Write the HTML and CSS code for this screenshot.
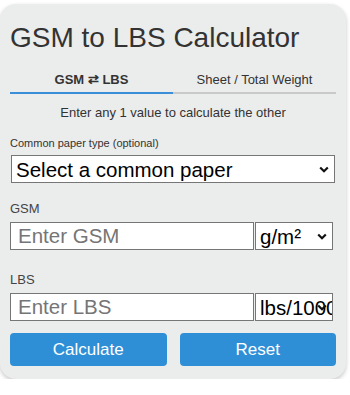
FILE: index.html
```html
<!DOCTYPE html>
<html>
<head>
<meta charset="utf-8">
<link rel="stylesheet" href="styles.css">
</head>
<body>
<div class="card">
  <h1 class="title">GSM to LBS Calculator</h1>
  <div class="tabs">
    <div class="tab active">GSM ⇄ LBS</div>
    <div class="tab">Sheet / Total Weight</div>
  </div>
  <p class="hint">Enter any 1 value to calculate the other</p>
  <label class="small-label">Common paper type (optional)</label>
  <div class="select-wrap paper-wrap">
    <select class="paper-select">
      <option>Select a common paper</option>
    </select>
    <svg class="chev" width="10" height="7" viewBox="0 0 10 7"><path d="M1.2 1.5 L5 5.2 L8.8 1.5" fill="none" stroke="#111" stroke-width="2.2"/></svg>
  </div>
  <div class="group">
    <label class="field-label">GSM</label>
    <div class="row">
      <input class="num" type="text" placeholder="Enter GSM">
      <div class="select-wrap">
        <select class="unit"><option>g/m²</option></select>
        <svg class="chev" width="10" height="7" viewBox="0 0 10 7"><path d="M1.2 1.5 L5 5.2 L8.8 1.5" fill="none" stroke="#111" stroke-width="2.2"/></svg>
      </div>
    </div>
  </div>
  <div class="group group-lbs">
    <label class="field-label">LBS</label>
    <div class="row">
      <input class="num" type="text" placeholder="Enter LBS">
      <div class="select-wrap">
        <select class="unit"><option>lbs/1000 sheets</option></select>
        <svg class="chev" width="10" height="7" viewBox="0 0 10 7"><path d="M1.2 1.5 L5 5.2 L8.8 1.5" fill="none" stroke="#111" stroke-width="2.2"/></svg>
      </div>
    </div>
  </div>
  <div class="buttons">
    <button class="btn">Calculate</button>
    <button class="btn">Reset</button>
  </div>
</div>
</body>
</html>
```

FILE: styles.css
```css
html, body {
  margin: 0;
  padding: 0;
  background: #ffffff;
}
body {
  font-family: Arial, "Liberation Sans", sans-serif;
  color: #333;
}
.card {
  box-sizing: border-box;
  width: 346px;
  margin-top: 4px;
  padding: 18px 10px 13px 10px;
  background: #ebecec;
  border-radius: 16px;
  box-shadow: 0 2px 4px rgba(0, 0, 0, 0.22);
}
.title {
  margin: 0;
  font-size: 28px;
  font-weight: normal;
  color: #333;
  line-height: 32px;
}
.tabs {
  display: flex;
  margin-top: 10px;
}
.tab {
  flex: 1;
  text-align: center;
  font-size: 13px;
  line-height: 15px;
  padding: 8px 0 5px 0;
  border-bottom: 2px solid #c9c9c9;
  color: #333;
}
.tab.active {
  font-weight: bold;
  border-bottom-color: #3b8fd8;
}
.hint {
  margin: 11px 0 0 0;
  text-align: center;
  font-size: 13px;
  line-height: 15px;
  color: #333;
}
.small-label {
  display: block;
  margin-top: 17px;
  font-size: 11px;
  line-height: 13px;
  color: #333;
}
.select-wrap {
  position: relative;
  display: flex;
}
.paper-wrap {
  width: 324px;
  margin: 5px 0 0 1px;
}
.chev {
  position: absolute;
  right: 6px;
  top: 11px;
  pointer-events: none;
}
.paper-select,
.unit {
  -webkit-appearance: none;
  appearance: none;
  box-sizing: border-box;
  height: 28px;
  margin: 0;
  padding: 0 0 0 4px;
  font-family: Arial, "Liberation Sans", sans-serif;
  font-size: 20.5px;
  color: #000;
  background: #fff;
  border: 1px solid #767676;
  border-radius: 0;
}
.paper-select {
  width: 324px;
}
.unit {
  width: 78px;
  padding-left: 4px;
}
.group {
  margin-top: 18px;
}
.group-lbs {
  margin-top: 22px;
}
.field-label {
  display: block;
  font-size: 13px;
  line-height: 15px;
  color: #444;
  margin-bottom: 6px;
}
.row {
  display: flex;
  gap: 1px;
}
.num {
  box-sizing: border-box;
  width: 244px;
  height: 28px;
  margin: 0;
  padding: 0 7px;
  font-family: Arial, "Liberation Sans", sans-serif;
  font-size: 20.5px;
  color: #000;
  background: #fff;
  border: 1px solid #767676;
  border-radius: 0;
  outline: none;
}
.num::placeholder {
  color: #757575;
}
.buttons {
  display: flex;
  gap: 13px;
  margin-top: 12px;
}
.btn {
  flex: 1;
  height: 33px;
  border: none;
  border-radius: 4px;
  background: #2e8fd7;
  color: #fff;
  font-family: Arial, "Liberation Sans", sans-serif;
  font-size: 17px;
  padding: 0;
}
```
